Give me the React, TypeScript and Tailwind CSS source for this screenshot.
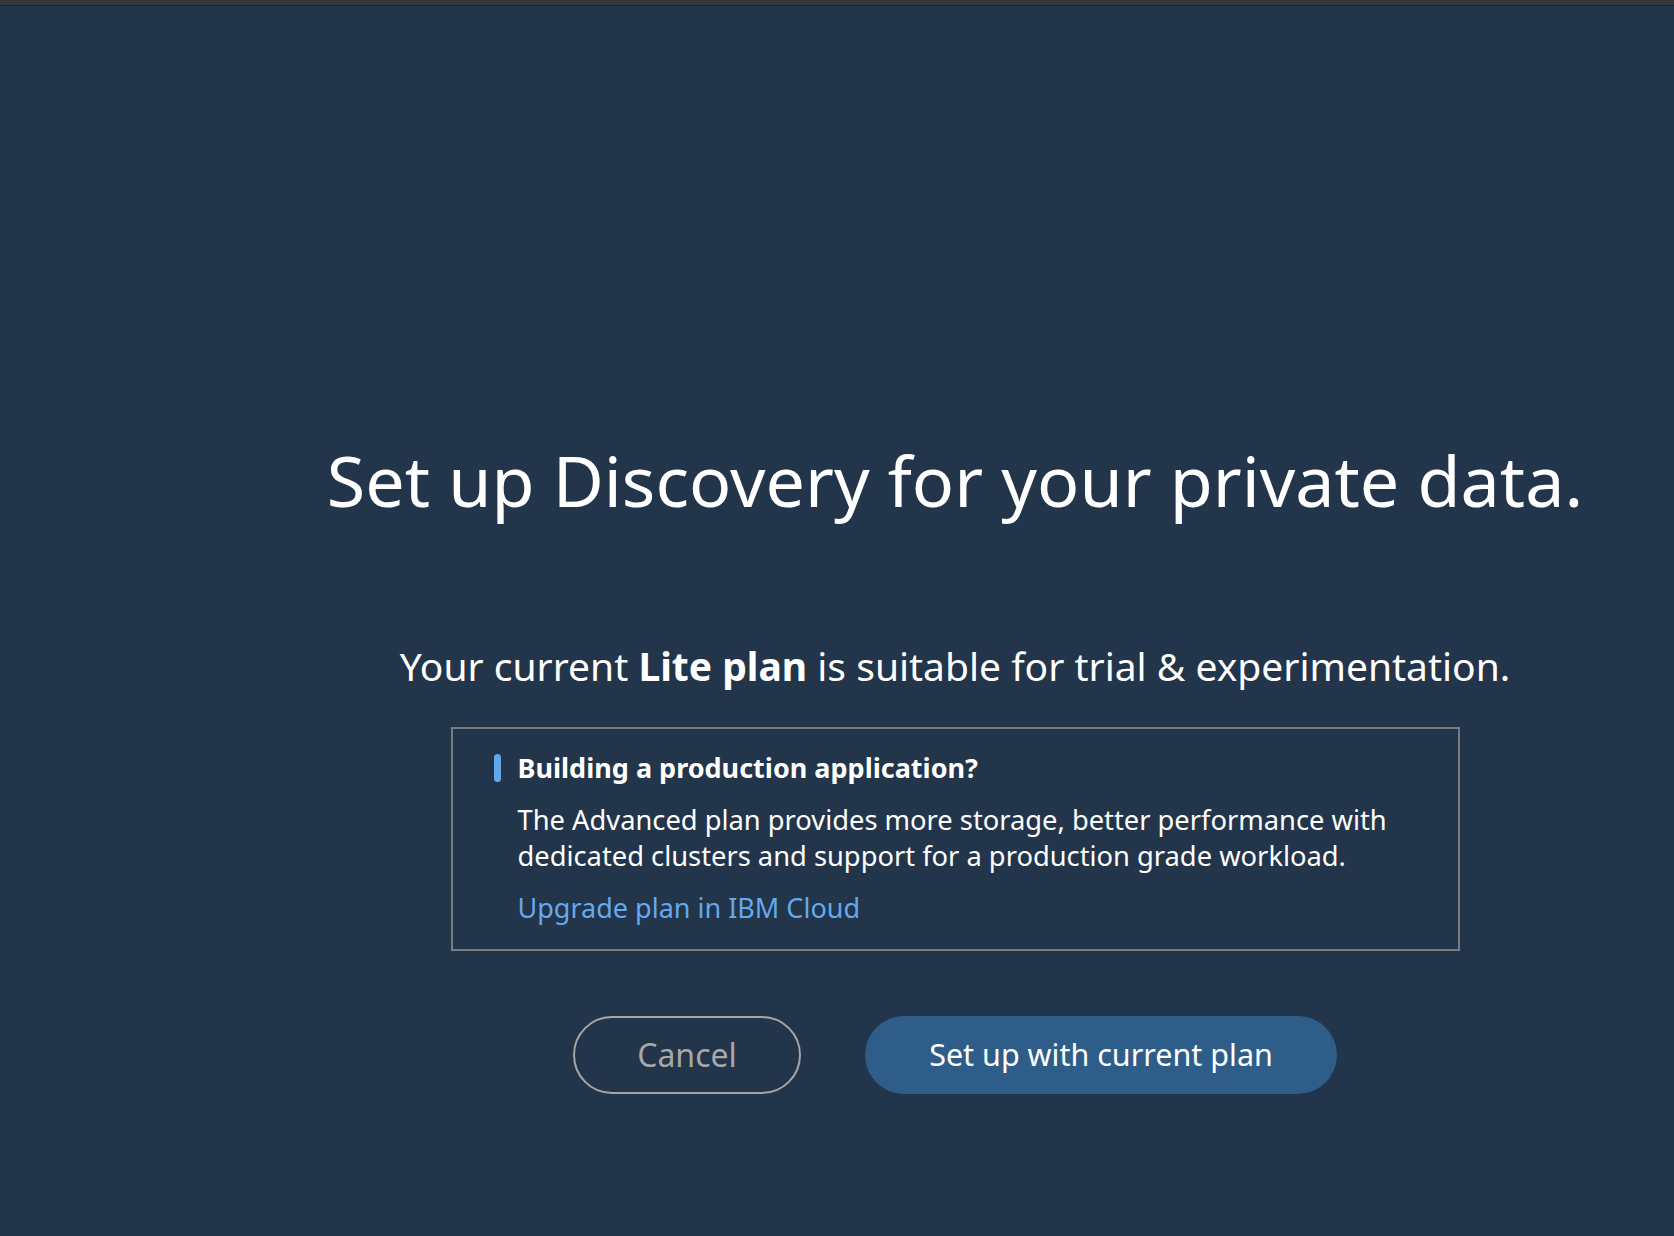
import React from "react";

const font = { fontFamily: '"Noto Sans", "Open Sans", Arial, sans-serif' };

function UpgradeNotice() {
  return (
    <div className="w-[1009px] border-2 border-[#797c80] pl-[41px] pr-6 pt-[21px] pb-[23px]">
      <div className="flex items-center">
        <span className="mr-[17px] h-[28px] w-[7px] rounded-full bg-[#62a8ec]" />
        <h2 className="text-[27px] font-bold leading-[36px] text-white">
          Building a production application?
        </h2>
      </div>
      <p className="mt-[16px] pl-[24px] text-[27.3px] leading-[36px] text-white">
        The Advanced plan provides more storage, better performance with
        <br />
        dedicated clusters and support for a production grade workload.
      </p>
      <a
        href="#"
        className="mt-[16px] block pl-[24px] text-[27px] leading-[36px] text-[#64a9ee]"
      >
        Upgrade plan in IBM Cloud
      </a>
    </div>
  );
}

export default function App() {
  return (
    <div className="flex min-h-screen flex-col bg-[#22354b]" style={font}>
      {/* window chrome strip */}
      <div className="h-[6px] shrink-0 border-b border-[#1d2024] bg-[#333739]" />

      <div className="flex flex-1">
        {/* collapsed nav area */}
        <div className="w-[236px] shrink-0" />

        <main className="flex flex-1 flex-col items-center pt-[434px]">
          <h1 className="whitespace-nowrap text-[70px] font-normal leading-[80px] text-white">
            Set up Discovery for your private data.
          </h1>

          <p className="mt-[120px] whitespace-nowrap text-[39px] leading-[52px] text-white">
            Your current <span className="font-bold">Lite plan</span> is suitable for trial &amp; experimentation.
          </p>

          <div className="mt-[35px]">
            <UpgradeNotice />
          </div>

          <div className="mt-[65px] flex gap-[64px]">
            <button className="h-[78px] w-[228px] rounded-full border-2 border-[#a6a6a6] text-[32px] text-[#a8a8a8]">
              Cancel
            </button>
            <button className="h-[78px] w-[472px] rounded-full bg-[#2e5d8a] text-[30.5px] text-white">
              Set up with current plan
            </button>
          </div>
        </main>
      </div>
    </div>
  );
}
